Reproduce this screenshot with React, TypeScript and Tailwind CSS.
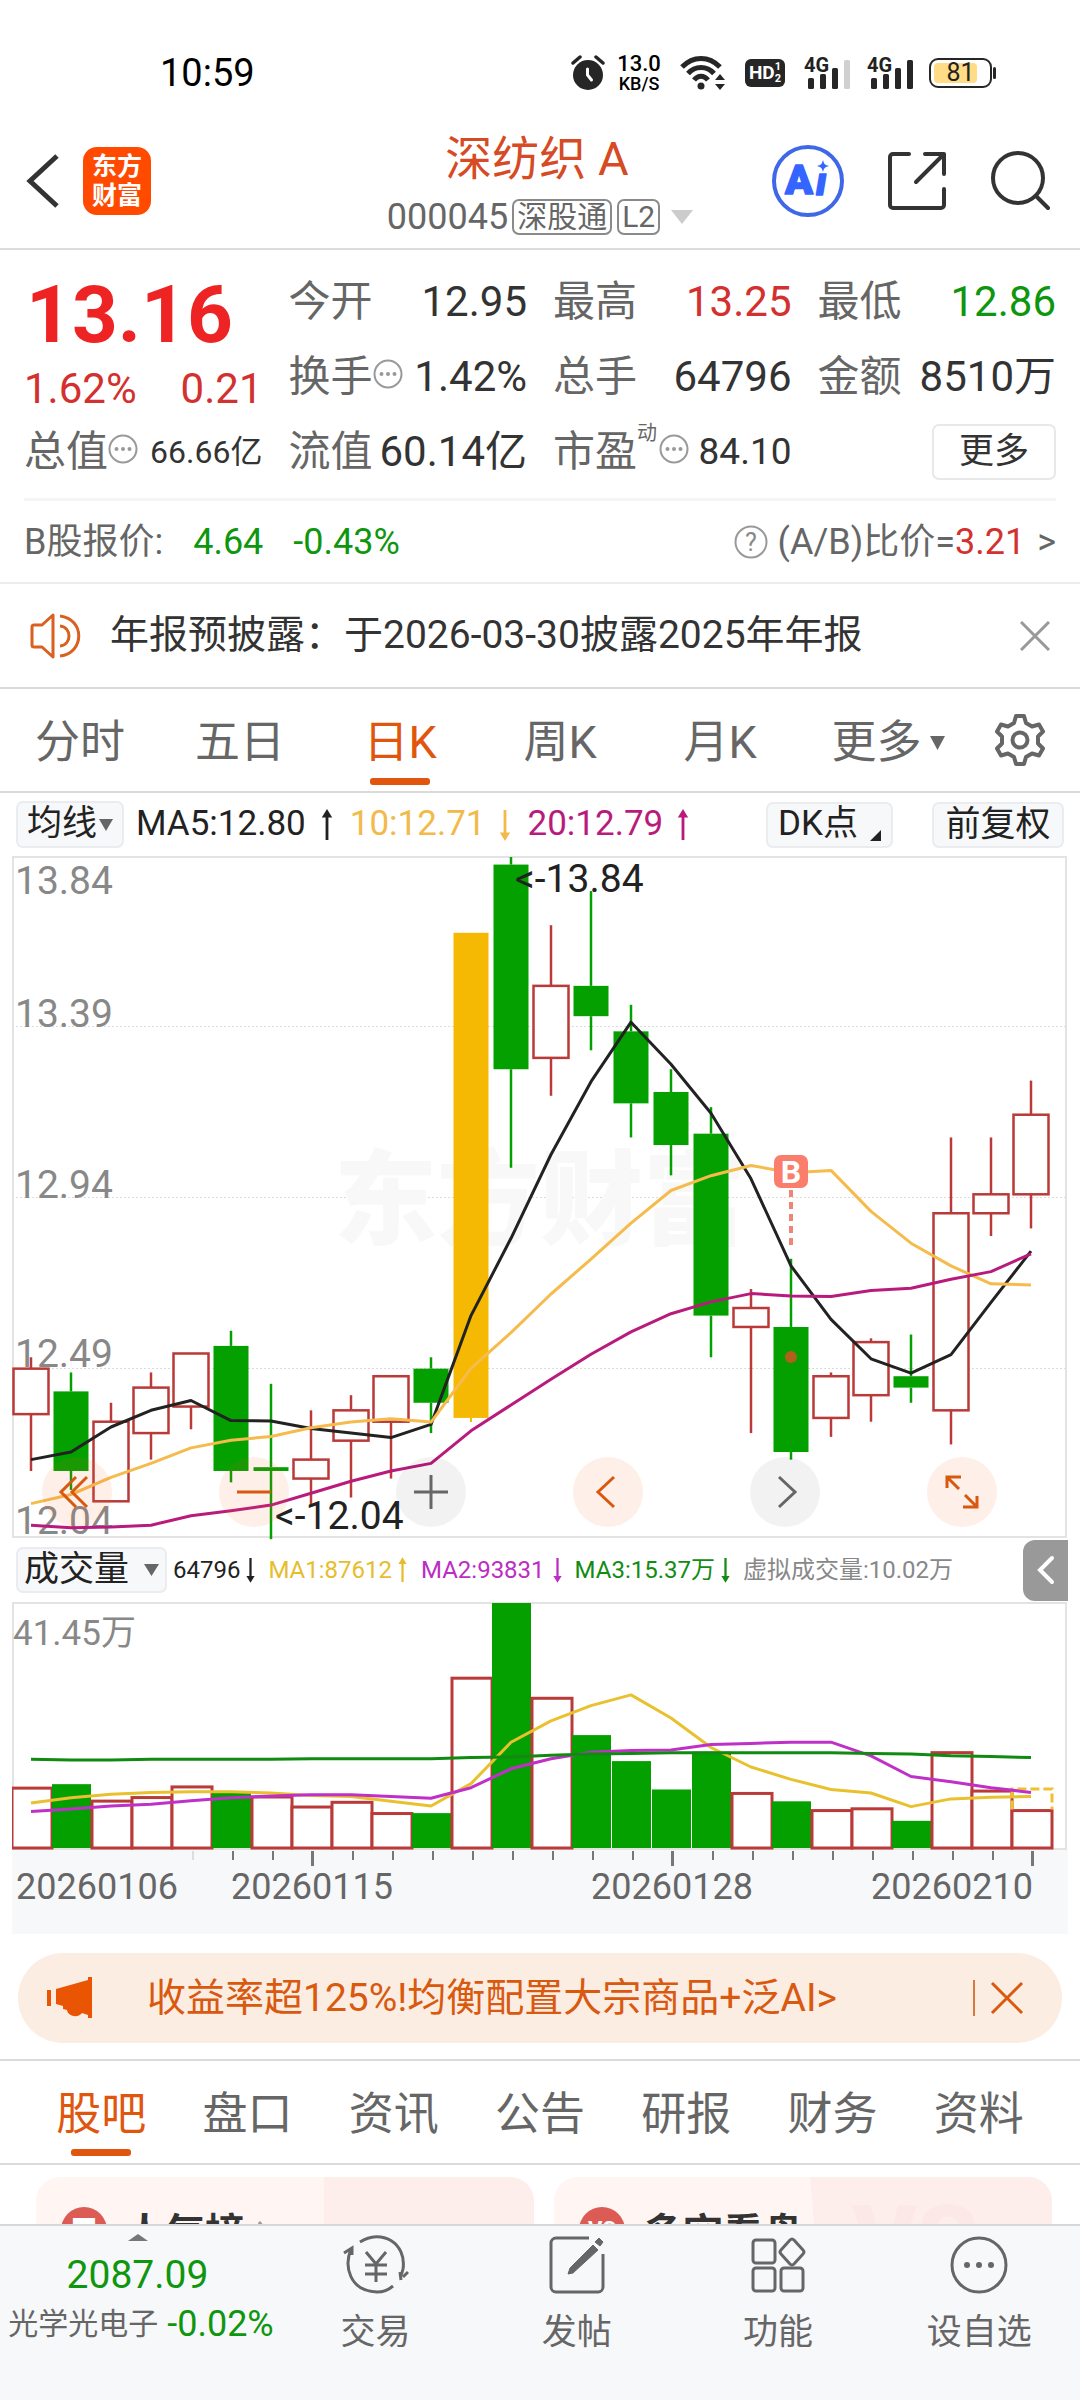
import { useState } from 'react';
import type { ReactNode } from 'react';

type Candle = { open: number; close: number; high: number; low: number; vol: number };

const RED = '#b93a38';
const GREEN = '#03a000';

// open, close, high, low, volume (in 万)
const rawCandles: [number, number, number, number, number][] = [
    [12.37, 12.49, 12.52, 12.22, 10.3],
    [12.43, 12.22, 12.48, 12.17, 10.8],
    [12.14, 12.35, 12.4, 12.14, 8.1],
    [12.32, 12.44, 12.48, 12.25, 8.7],
    [12.39, 12.53, 12.53, 12.33, 10.5],
    [12.55, 12.22, 12.59, 12.19, 9.6],
    [12.23, 12.22, 12.45, 12.04, 8.8],
    [12.2, 12.25, 12.38, 12.13, 7.1],
    [12.3, 12.38, 12.42, 12.15, 7.9],
    [12.35, 12.47, 12.47, 12.2, 6.0],
    [12.49, 12.4, 12.52, 12.32, 5.9],
    [12.36, 13.64, 13.64, 12.35, 28.9],
    [13.82, 13.28, 13.84, 13.02, 41.45],
    [13.31, 13.5, 13.66, 13.21, 25.5],
    [13.5, 13.42, 13.75, 13.33, 19.1],
    [13.38, 13.19, 13.45, 13.1, 14.7],
    [13.22, 13.08, 13.28, 13.0, 9.9],
    [13.11, 12.63, 13.18, 12.52, 16.3],
    [12.6, 12.65, 12.7, 12.32, 9.4],
    [12.6, 12.27, 12.78, 12.25, 7.9],
    [12.36, 12.47, 12.48, 12.31, 6.5],
    [12.42, 12.56, 12.57, 12.35, 6.8],
    [12.47, 12.44, 12.58, 12.4, 4.6],
    [12.38, 12.9, 13.1, 12.29, 16.3],
    [12.9, 12.95, 13.1, 12.84, 9.8],
    [12.95, 13.16, 13.25, 12.86, 6.5],
];

const candles: Candle[] = rawCandles.map(([open, close, high, low, vol]) => ({ open, close, high, low, vol }));
const LIMIT_UP_INDEX = 11;
// doji day, its volume bar is drawn hollow
const DOJI_INDEX = 6;

const ma5 = [12.25, 12.27, 12.336, 12.38, 12.406, 12.353, 12.352, 12.332, 12.32, 12.308, 12.343, 12.63, 12.834, 13.055, 13.247, 13.404, 13.293, 13.164, 12.991, 12.761, 12.62, 12.516, 12.478, 12.527, 12.665, 12.8];
const ma10 = [12.134, 12.158, 12.203, 12.24, 12.281, 12.301, 12.311, 12.334, 12.349, 12.358, 12.349, 12.491, 12.585, 12.687, 12.779, 12.874, 12.96, 12.999, 13.026, 13.007, 13.013, 12.905, 12.821, 12.761, 12.714, 12.711];
const ma20 = [12.077, 12.07, 12.072, 12.077, 12.102, 12.115, 12.13, 12.161, 12.193, 12.22, 12.24, 12.326, 12.394, 12.462, 12.528, 12.587, 12.635, 12.666, 12.688, 12.682, 12.68, 12.696, 12.702, 12.726, 12.746, 12.793];

const volMa1 = [7.6, 8.5, 9.1, 9.4, 9.5, 9.5, 9.3, 8.9, 8.7, 7.9, 7.1, 10.9, 17.9, 21.5, 24.1, 25.9, 22.0, 17.0, 13.7, 11.6, 9.9, 9.3, 7.0, 8.3, 8.6, 8.7];
const volMa2 = [6.2, 6.6, 7.1, 7.4, 8.0, 8.5, 8.8, 9.0, 9.0, 8.7, 8.4, 10.2, 13.4, 15.1, 16.2, 16.5, 16.6, 17.5, 17.7, 17.9, 17.9, 15.6, 12.1, 11.2, 10.2, 9.4];
const volMa3 = [15.0, 14.9, 14.9, 15.0, 15.0, 15.0, 15.0, 15.1, 15.1, 15.1, 15.1, 15.3, 15.4, 15.7, 15.9, 16.0, 16.1, 16.1, 16.1, 16.1, 16.1, 16.0, 15.9, 15.6, 15.5, 15.3];

const xAt = (i: number) => 19 + i * 40;
const yPrice = (p: number) => (13.84 - p) * 379 + 1;
const yVol = (v: number) => 246 - (v / 41.45) * 245;
const toPoints = (values: number[], y: (v: number) => number) => values.map((v, i) => `${xAt(i)},${y(v).toFixed(1)}`).join(' ');

function Triangle({ className, up }: { className: string; up?: boolean }) {
    return (
        <svg viewBox="0 0 10 8" preserveAspectRatio="none" className={className} fill="currentColor" aria-hidden="true">
            <path d={up ? 'M0 8h10L5 0z' : 'M0 0h10L5 8z'} />
        </svg>
    );
}

function TrendArrow({ up, className }: { up?: boolean; className: string }) {
    return (
        <svg viewBox="0 0 12 34" className={className} fill="currentColor" aria-hidden="true">
            {up ? <path d="M6 0l5.500 9h-4v24h-3v-24h-4z" /> : <path d="M6 34l5.500-9h-4v-24h-3v24h-4z" />}
        </svg>
    );
}

function DotsIcon() {
    return (
        <svg viewBox="0 0 30 30" className="mb-[6px] h-[30px] w-[30px] shrink-0" aria-hidden="true">
            <circle cx="15" cy="15" r="13.500" fill="none" stroke="#999" strokeWidth="2" />
            <g fill="#999">
                <circle cx="8.500" cy="15" r="2" />
                <circle cx="15" cy="15" r="2" />
                <circle cx="21.500" cy="15" r="2" />
            </g>
        </svg>
    );
}

function Signal({ weak }: { weak?: boolean }) {
    return (
        <svg viewBox="0 -6 48 46" className="h-[46px] w-[48px]" aria-hidden="true">
            <text x="0" y="16" fontSize="20" fontWeight="700" fill="#222">4G</text>
            <g fill="#262626">
                <rect x="4" y="22" width="6" height="11" rx="1.500" />
                <rect x="16" y="18" width="6" height="15" rx="1.500" />
                <rect x="28" y="12" width="6" height="21" rx="1.500" />
                <rect x="40" y="4" width="6" height="29" rx="1.500" fill={weak ? '#d0d0d0' : '#262626'} />
            </g>
        </svg>
    );
}

function StatusBar() {
    return (
        <div className="flex h-[110px] items-center justify-between pt-[36px] pr-[84px] pl-[160px] text-black">
            <span className="text-[38px]">10:59</span>
            <div className="flex items-center">
                <svg viewBox="0 0 34 36" className="h-[36px] w-[34px]" aria-hidden="true">
                    <circle cx="17" cy="20" r="15" fill="#262626" />
                    <path d="M2 8l7-6M32 8l-7-6" stroke="#262626" strokeWidth="3.500" strokeLinecap="round" />
                    <path d="M16.500 14v6l4 5" stroke="#fff" strokeWidth="3" fill="none" strokeLinecap="round" />
                </svg>
                <div className="ml-[11px] flex w-[46px] flex-col items-center font-medium">
                    <span className="text-[22px] leading-[22px]">13.0</span>
                    <span className="text-[18px] leading-[18px]">KB/S</span>
                </div>
                <svg viewBox="0 0 46 36" className="ml-[18px] h-[36px] w-[46px]" fill="none" stroke="#262626" strokeWidth="5" aria-hidden="true">
                    <path d="M2 12C13 .5 29 .5 40 12" />
                    <path d="M8 18.500C15 10.500 27 10.500 34 18.500" />
                    <path d="M14 25c4-5 10-5 14 0" />
                    <circle cx="21" cy="31" r="3.500" fill="#262626" stroke="none" />
                    <path d="M35 25h10l-5-6zM35 29h10l-5 6z" fill="#262626" stroke="none" />
                </svg>
                <div className="ml-[19px] flex h-[28px] w-[40px] items-center justify-center rounded-[6px] bg-[#262626] text-white">
                    <span className="text-[19px] leading-[28px] font-bold">HD</span>
                    <span className="flex flex-col text-[11px] leading-[12px] font-bold">
                        <span>1</span>
                        <span>2</span>
                    </span>
                </div>
                <div className="ml-[19px] flex gap-[15px]">
                    <Signal weak />
                    <Signal />
                </div>
                <div className="ml-[14px] flex h-[30px] w-[63px] rounded-[9px] border-[2px] border-[#262626] p-[3px]">
                    <div className="flex w-[43px] items-center justify-center rounded-[4px] bg-[#ffdc85] pl-[10px] text-[25px] leading-[20px] text-[#222]">81</div>
                </div>
                <div className="ml-[1px] h-[12px] w-[3px] rounded-full bg-[#262626]" />
            </div>
        </div>
    );
}

function Header() {
    return (
        <header className="grid h-[140px] grid-cols-[1fr_auto_1fr] border-b-2 border-[#dcdcdc]">
            <div className="flex items-center pt-[4px] pl-[26px]">
                <button aria-label="返回" className="w-[34px]">
                    <svg viewBox="0 0 34 56" className="h-[56px] w-[34px]" fill="none" stroke="#333" strokeWidth="5">
                        <path d="M31 3L4 28l27 25" />
                    </svg>
                </button>
                <a href="#home" className="ml-[23px] flex h-[68px] w-[68px] flex-col items-center justify-center rounded-[14px] bg-[#ff4a00] text-[25px] leading-[29px] font-bold text-white">
                    <span>东方</span>
                    <span>财富</span>
                </a>
            </div>
            <div className="flex flex-col items-center pt-[21px]">
                <h1 className="pr-[6px] text-[47px] leading-[56px] text-[#d64a24]">深纺织 A</h1>
                <button className="mt-[12px] flex h-[36px] items-center text-[36px] leading-[36px] text-[#666]">
                    000045
                    <span className="ml-[4px] rounded-[7px] border-[2px] border-[#8a8a8a] px-[3px] text-[30px] leading-[32px]">深股通</span>
                    <span className="ml-[5px] rounded-[7px] border-[2px] border-[#8a8a8a] px-[3px] text-[30px] leading-[32px]">L2</span>
                    <Triangle className="ml-[11px] h-[14px] w-[22px] text-[#ccc]" />
                </button>
            </div>
            <div className="flex items-center justify-end pt-[4px] pr-[30px]">
                <button aria-label="Ai" className="mr-[42px]">
                    <svg viewBox="0 0 74 74" className="h-[74px] w-[74px]">
                        <circle cx="37" cy="37" r="34" fill="#fff" stroke="#3f68e8" strokeWidth="4" />
                        <g fill="#3565ff" stroke="#3565ff" strokeWidth="1.500" strokeLinejoin="round" fontWeight="900" fontFamily="Roboto">
                            <text x="14" y="50" fontSize="41">A</text>
                            <text x="45" y="51" fontSize="38" fontStyle="italic">ı</text>
                        </g>
                        <path d="M52 16c1 4 2 5 6 6-4 1-5 2-6 6-1-4-2-5-6-6 4-1 5-2 6-6z" fill="#3565ff" />
                    </svg>
                </button>
                <button aria-label="分享" className="mr-[43px]">
                    <svg viewBox="0 0 60 60" className="h-[60px] w-[60px]" fill="none" stroke="#333" strokeWidth="4" strokeLinecap="round" strokeLinejoin="round">
                        <path d="M22 3H6a3 3 0 0 0-3 3v48a3 3 0 0 0 3 3h48a3 3 0 0 0 3-3V38" />
                        <path d="M38 3h19v20M57 3L29 31" />
                    </svg>
                </button>
                <button aria-label="搜索">
                    <svg viewBox="0 0 60 60" className="h-[60px] w-[60px]" fill="none" stroke="#333" strokeWidth="4" strokeLinecap="round">
                        <circle cx="28" cy="27" r="25" />
                        <path d="M46 45l12 12" />
                    </svg>
                </button>
            </div>
        </header>
    );
}

function Stat({ label, value, icon, sup, color, size }: { label: string; value: string; icon?: boolean; sup?: string; color?: string; size?: string }) {
    return (
        <div className="flex h-[75px] items-center justify-between whitespace-nowrap">
            <dt className="flex items-center text-[42px] text-[#666]">
                {label}
                {sup && <span className="mb-[38px] w-[22px] text-[20px] leading-[20px]">{sup}</span>}
                {icon && <DotsIcon />}
            </dt>
            <dd className={`${size ?? 'text-[42px]'} ${color ?? 'text-[#333]'}`}>{value}</dd>
        </div>
    );
}

function Quote() {
    return (
        <section className="px-[24px]">
            <dl className="grid grid-cols-4 gap-x-[26px] pt-[14px] pb-[9px]">
                <div className="row-span-2 flex h-[150px] flex-col pt-[8px] text-[#d3312f]">
                    <span className="pl-[2px] text-[80px] leading-[86px] font-bold text-[#ee2424]">13.16</span>
                    <div className="flex items-center justify-between text-[42px] leading-[62px]">
                        <span>1.62%</span>
                        <span>0.21</span>
                    </div>
                </div>
                <Stat label="今开" value="12.95" />
                <Stat label="最高" value="13.25" color="text-[#d3312f]" />
                <Stat label="最低" value="12.86" color="text-[#0f960f]" />
                <Stat label="换手" value="1.42%" icon />
                <Stat label="总手" value="64796" />
                <Stat label="金额" value="8510万" />
                <Stat label="总值" value="66.66亿" icon size="text-[32px]" />
                <Stat label="流值" value="60.14亿" />
                <Stat label="市盈" value="84.10" sup="动" icon size="text-[37px]" />
                <div className="flex items-center justify-end">
                    <button className="h-[56px] w-[124px] rounded-[7px] border-2 border-[#e8e8ea] text-[35px] leading-[50px] text-[#333]">更多</button>
                </div>
            </dl>
            <div className="flex h-[84px] items-center border-t-3 border-[#f5f5f6] text-[36px] text-[#666]">
                <span>B股报价:</span>
                <span className="ml-[30px] text-[#0f960f]">4.64</span>
                <span className="ml-[30px] text-[#0f960f]">-0.43%</span>
                <a href="#ratio" className="ml-auto flex items-center">
                    <svg viewBox="0 0 34 34" className="mr-[10px] h-[34px] w-[34px]" aria-hidden="true">
                        <circle cx="17" cy="17" r="15.500" fill="none" stroke="#999" strokeWidth="2" />
                        <text x="17" y="26" fontSize="25" fill="#888" textAnchor="middle">?</text>
                    </svg>
                    (A/B)比价=<span className="text-[#d3312f]">3.21</span>
                    <span className="ml-[12px]">&gt;</span>
                </a>
            </div>
        </section>
    );
}

function Notice() {
    return (
        <div className="flex h-[107px] items-center border-y-2 border-t-[#ececec] border-b-[#dadada] px-[30px] text-[39px] text-[#333]">
            <svg viewBox="0 0 52 46" className="h-[46px] w-[52px]" fill="none" stroke="#d9601f" strokeWidth="3" strokeLinejoin="round" aria-hidden="true">
                <path d="M23 2v42L12 34H4a2 2 0 0 1-2-2V14a2 2 0 0 1 2-2h8z" />
                <path d="M30 3c25 3 25 37 0 40M30 13c12 1 12 19 0 20" />
            </svg>
            <p className="ml-[28px]">年报预披露：于2026-03-30披露2025年年报</p>
            <button aria-label="关闭" className="ml-auto">
                <svg viewBox="0 0 30 30" className="h-[30px] w-[30px]" stroke="#999" strokeWidth="3">
                    <path d="M1 1l28 28M29 1L1 29" />
                </svg>
            </button>
        </div>
    );
}

const periods = ['分时', '五日', '日K', '周K', '月K'];

function PeriodTabs() {
    const [active, setActive] = useState('日K');

    return (
        <nav className="flex h-[104px] items-stretch border-b-2 border-[#dadada] text-[45px] text-[#666]">
            {periods.map((name) => (
                <button key={name} onClick={() => setActive(name)} className={`relative flex flex-[4] items-center justify-center pt-[6px] ${name === active ? 'text-[#e0560f]' : ''}`}>
                    {name}
                    {name === active && <span className="absolute bottom-[6px] h-[7px] w-[60px] rounded-[3px] bg-[#e0560f]" />}
                </button>
            ))}
            <button className="flex flex-[4] items-center justify-center pt-[6px] whitespace-nowrap">
                <span className="ml-[16px]">更多</span>
                <Triangle className="ml-[8px] h-[14px] w-[15px]" />
            </button>
            <button aria-label="设置" className="flex flex-[3] items-center justify-center">
                <svg viewBox="0 0 52 52" className="h-[52px] w-[52px]" fill="none" stroke="#666" strokeWidth="4" strokeLinejoin="round">
                    <path d="M22 2h8l2 7 6 3.500 7-2 4 7-5 5v7l5 5-4 7-7-2-6 3.500-2 7h-8l-2-7-6-3.500-7 2-4-7 5-5v-7l-5-5 4-7 7 2L20 9z" />
                    <circle cx="26" cy="26" r="7.500" />
                </svg>
            </button>
        </nav>
    );
}

function MaRow() {
    return (
        <div className="flex h-[63px] items-center px-[16px] text-[35px] whitespace-nowrap text-[#222]">
            <button className="flex h-[47px] w-[108px] items-center justify-center rounded-[7px] border-2 border-[#ebecf0] bg-[#f7f8fa]">
                均线
                <Triangle className="ml-[2px] h-[12px] w-[14px] text-[#666]" />
            </button>
            <span className="ml-[12px]">MA5:12.80</span>
            <TrendArrow up className="ml-[15px] h-[32px] w-[12px]" />
            <span className="ml-[17px] text-[#f2ba4a]">10:12.71</span>
            <TrendArrow className="ml-[13px] h-[32px] w-[12px] text-[#f2ba4a]" />
            <span className="ml-[17px] text-[#b81b7c]">20:12.79</span>
            <TrendArrow up className="ml-[14px] h-[32px] w-[12px] text-[#b81b7c]" />
            <button className="ml-auto flex h-[46px] w-[127px] items-center justify-center rounded-[7px] border-2 border-[#ebecf0] bg-[#f7f8fa]">
                DK点
                <svg viewBox="0 0 10 10" className="mt-[22px] ml-[12px] h-[11px] w-[11px]" aria-hidden="true">
                    <path d="M10 0v10H0z" fill="#222" />
                </svg>
            </button>
            <button className="ml-[39px] h-[46px] w-[132px] rounded-[7px] border-2 border-[#ebecf0] bg-[#f7f8fa] leading-[42px]">前复权</button>
        </div>
    );
}

function CandleShape({ candle, index }: { candle: Candle; index: number }) {
    const x = xAt(index);
    const rising = candle.close > candle.open;
    const top = yPrice(Math.max(candle.open, candle.close));
    const bottom = yPrice(Math.min(candle.open, candle.close));

    if (index === LIMIT_UP_INDEX) {
        return (
            <g fill="#f5b904">
                <rect x={x - 17.5} y={top} width="35" height={bottom - top} />
                <rect x={x - 1} y={bottom} width="2" height="4" />
            </g>
        );
    }

    return (
        <g stroke={rising ? RED : GREEN} strokeWidth="2.500">
            <line x1={x} x2={x} y1={yPrice(candle.high)} y2={top} />
            <line x1={x} x2={x} y1={bottom} y2={yPrice(candle.low)} />
            {rising ? (
                <rect x={x - 17.5} y={top} width="35" height={bottom - top} fill="#fff" />
            ) : (
                <rect x={x - 17.5} y={top} width="35" height={bottom - top} fill={GREEN} stroke="none" />
            )}
        </g>
    );
}

const chartButtons: { label: string; warm: boolean; icon: string }[] = [
    { label: '最早', warm: true, icon: 'M34 20L19 35l15 15M45 20L30 35l15 15' },
    { label: '缩小', warm: true, icon: 'M18 35h34' },
    { label: '放大', warm: false, icon: 'M18 35h34M35 18v34' },
    { label: '向左', warm: true, icon: 'M41 20L25 35l16 15' },
    { label: '向右', warm: false, icon: 'M29 20l16 15-16 15' },
    { label: '全屏', warm: true, icon: 'M20 31V20h14M20 20l12 12M50 39v11H36M50 50L38 38' },
];

function PriceChart() {
    return (
        <div className="relative mx-[12px]">
            <svg viewBox="0 0 1056 682" className="block w-full overflow-visible" fontSize="39">
                <rect x="1" y="1" width="1053" height="680" fill="none" stroke="#e3e3e3" strokeWidth="2" />
                <g stroke="#dcdcdc" strokeDasharray="2 2">
                    <line x1="0" x2="1054" y1="170.500" y2="170.500" />
                    <line x1="0" x2="1054" y1="341.500" y2="341.500" />
                    <line x1="0" x2="1054" y1="512.500" y2="512.500" />
                </g>
                <text x="322" y="381" fontSize="103" fontWeight="900" fill="#f8f8f8">东方财富</text>
                <g fill="#888">
                    <text x="3" y="38">13.84</text>
                    <text x="3" y="171">13.39</text>
                    <text x="3" y="342">12.94</text>
                    <text x="3" y="511">12.49</text>
                    <text x="3" y="678">12.04</text>
                </g>
                {candles.map((candle, i) => (
                    <CandleShape key={i} candle={candle} index={i} />
                ))}
                <g fill="none" strokeWidth="3" strokeLinejoin="round">
                    <polyline points={toPoints(ma5, yPrice)} stroke="#222" />
                    <polyline points={toPoints(ma10, yPrice)} stroke="#f5bb4d" />
                    <polyline points={toPoints(ma20, yPrice)} stroke="#b81b7c" />
                </g>
                <line x1="779" x2="779" y1="334" y2="392" stroke="#ef8577" strokeWidth="4" strokeDasharray="7 5" />
                <rect x="762" y="299" width="34" height="33" rx="7" fill="#fb7e6d" />
                <text x="779" y="327" fontSize="32" fontWeight="700" fill="#fff" textAnchor="middle">B</text>
                <circle cx="779" cy="501" r="6" fill="#b0601a" />
                <g fill="#222">
                    <text x="503" y="36">&lt;-13.84</text>
                    <text x="263" y="673">&lt;-12.04</text>
                </g>
            </svg>
            <div className="absolute right-[71px] bottom-[11px] left-[30px] flex justify-between">
                {chartButtons.map((button) => (
                    <button key={button.label} aria-label={button.label} className={`h-[70px] w-[70px] rounded-full ${button.warm ? 'bg-[#f5651a]/10 text-[#d9580f]' : 'bg-black/5 text-[#666]'}`}>
                        <svg viewBox="0 0 70 70" fill="none" stroke="currentColor" strokeWidth="3">
                            <path d={button.icon} />
                        </svg>
                    </button>
                ))}
            </div>
        </div>
    );
}

function VolumeRow() {
    return (
        <div className="mr-[12px] ml-[16px] flex h-[64px] items-center text-[24px] whitespace-nowrap text-[#222]">
            <button className="flex h-[46px] w-[151px] items-center justify-center gap-[15px] rounded-[7px] border-2 border-[#ebecf0] bg-[#f7f8fa] text-[35px]">
                成交量
                <Triangle className="h-[12px] w-[15px] text-[#666]" />
            </button>
            <span className="ml-[6px]">64796</span>
            <TrendArrow className="ml-[6px] h-[32px] w-[9px]" />
            <span className="ml-[13px] text-[#e6bd2d]">MA1:87612</span>
            <TrendArrow up className="ml-[6px] h-[32px] w-[9px] text-[#e6bd2d]" />
            <span className="ml-[14px] text-[#bb2dc4]">MA2:93831</span>
            <TrendArrow className="ml-[8px] h-[32px] w-[9px] text-[#bb2dc4]" />
            <span className="ml-[13px] text-[#128c12]">MA3:15.37万</span>
            <TrendArrow className="ml-[6px] h-[32px] w-[9px] text-[#128c12]" />
            <span className="ml-[13px] text-[#888]">虚拟成交量:10.02万</span>
            <button aria-label="展开" className="ml-auto flex h-[61px] w-[45px] items-center justify-center rounded-l-[12px] bg-[#999]">
                <svg viewBox="0 0 18 30" className="h-[30px] w-[18px]" fill="none" stroke="#fff" strokeWidth="4" strokeLinecap="round">
                    <path d="M15 3L3 15l12 12" />
                </svg>
            </button>
        </div>
    );
}

function VolumeChart() {
    const last = candles.length - 1;

    return (
        <div className="mx-[12px]">
            <svg viewBox="0 0 1056 332" className="block w-full" fontSize="36">
                <rect x="0" y="248" width="1056" height="84" fill="#f7f8fa" />
                <rect x="1" y="1" width="1053" height="246" fill="none" stroke="#e3e3e3" strokeWidth="2" />
                <text x="1" y="43" fontSize="35" fill="#888">41.45万</text>
                {candles.map((candle, i) => {
                    const y = yVol(candle.vol);
                    return candle.close > candle.open || i === DOJI_INDEX ? (
                        <rect key={i} x={xAt(i) - 19} y={y + 1} width="40" height={245 - y} fill="#fff" stroke={RED} strokeWidth="3" />
                    ) : (
                        <rect key={i} x={xAt(i) - 19} y={y} width="39" height={246 - y} fill={GREEN} />
                    );
                })}
                <path d={`M${xAt(last) - 19} ${yVol(6.5)}V187h40V${yVol(6.5)}`} fill="none" stroke="#f0c030" strokeWidth="3" strokeDasharray="9 4" />
                <g fill="none" strokeWidth="3" strokeLinejoin="round">
                    <polyline points={toPoints(volMa1, yVol)} stroke="#e9c12f" />
                    <polyline points={toPoints(volMa2, yVol)} stroke="#bf30c8" />
                    <polyline points={toPoints(volMa3, yVol)} stroke="#118a11" />
                </g>
                {candles.map((_, i) => {
                    if (i < 4) return null;
                    const major = i === 7 || i === 16 || i === last;
                    return <rect key={i} x={xAt(i) + (major ? 0 : 1)} y="249" width={major ? 3 : 2} height={major ? 15 : 9} fill={i === 4 ? '#ddd' : '#777'} />;
                })}
                <g fill="#666">
                    <text x="4" y="297">20260106</text>
                    <text x="219" y="297">20260115</text>
                    <text x="579" y="297">20260128</text>
                    <text x="859" y="297">20260210</text>
                </g>
            </svg>
        </div>
    );
}

function Promo() {
    return (
        <div className="mx-[18px] mt-[19px] mb-[16px] flex h-[90px] items-center rounded-full bg-[#fcede3] pr-[38px] pl-[28px] text-[39px] text-[#d9590f]">
            <svg viewBox="0 0 48 42" className="h-[42px] w-[48px]" fill="#ea5504" aria-hidden="true">
                <path d="M1 13h4v16H1zM10 12L42 3V0h4v41h-4v-3l-6-2c-3 5-14 4-15-3l-4-1v-3l-7-2z" />
            </svg>
            <a href="#promo" className="ml-[53px]">收益率超125%!均衡配置大宗商品+泛AI&gt;</a>
            <span className="ml-auto h-[36px] w-[2px] bg-[#d9793f]" />
            <button aria-label="关闭" className="ml-[15px]">
                <svg viewBox="0 0 34 34" className="h-[34px] w-[34px]" stroke="#d9590f" strokeWidth="3">
                    <path d="M2 2l30 30M32 2L2 32" />
                </svg>
            </button>
        </div>
    );
}

const sections = ['股吧', '盘口', '资讯', '公告', '研报', '财务', '资料'];

function SectionTabs() {
    const [active, setActive] = useState('股吧');

    return (
        <nav className="flex h-[106px] border-y-2 border-[#dadada] px-[28px] text-[45px] text-[#666]">
            {sections.map((name) => (
                <button key={name} onClick={() => setActive(name)} className={`relative flex flex-1 items-center justify-center pt-[6px] ${name === active ? 'text-[#e0560f]' : ''}`}>
                    {name}
                    {name === active && <span className="absolute bottom-[7px] h-[7px] w-[60px] rounded-[3px] bg-[#e0560f]" />}
                </button>
            ))}
        </nav>
    );
}

function TopicCard({ title, badge, arrow, children }: { title: string; badge: ReactNode; arrow?: boolean; children: ReactNode }) {
    return (
        <a href="#topic" className="relative flex h-[140px] flex-1 items-start overflow-hidden rounded-[24px] bg-[#fff6f4] pt-[27px] pl-[25px]">
            <svg viewBox="0 0 260 140" className="absolute top-0 right-0 h-[140px] w-[260px]" aria-hidden="true">
                {children}
            </svg>
            <span className="relative mt-[3px] flex h-[46px] w-[46px] items-center justify-center rounded-full bg-[#dd5b55] text-[22px] leading-[46px] font-bold text-white">{badge}</span>
            <span className="relative ml-[18px] text-[40px] leading-[60px] font-bold text-[#333]">{title}</span>
            {arrow && (
                <svg viewBox="0 0 12 24" className="relative mt-[16px] ml-[12px] h-[24px] w-[12px]" fill="none" stroke="#999" strokeWidth="3" aria-hidden="true">
                    <path d="M2 2l8 10-8 10" />
                </svg>
            )}
        </a>
    );
}

function BottomBar() {
    const stroke = { fill: 'none', stroke: '#666', strokeWidth: 3 };
    const items: { label: string; icon: ReactNode }[] = [
        {
            label: '交易',
            icon: (
                <svg viewBox="0 0 66 60" className="h-[60px] w-[66px]" {...stroke}>
                    <path d="M17 8C38-6 64 9 60 35q-1 5-3 8M60 43l5-5M8 15C1 32 6 57 34 58q9 0 16-6M1 19l8-5v7M58 46l-1-8M23 18l10 12 10-12M22 31h22M22 40h22M33 30v18" />
                </svg>
            ),
        },
        {
            label: '发帖',
            icon: (
                <svg viewBox="0 0 60 60" className="h-[60px] w-[60px]" {...stroke}>
                    <path d="M42 4H9a5 5 0 0 0-5 5v44a5 5 0 0 0 5 5h42a5 5 0 0 0 5-5V20" />
                    <path d="M52 4l4 4-3 4-5-4zM46 11l5 5-25 23-5 1 2-6z" fill="#666" strokeWidth="1" />
                </svg>
            ),
        },
        {
            label: '功能',
            icon: (
                <svg viewBox="0 0 60 60" className="h-[60px] w-[60px]" {...stroke}>
                    <rect x="5" y="6" width="22" height="23" rx="3" />
                    <rect x="5" y="34" width="22" height="23" rx="3" />
                    <rect x="33" y="34" width="22" height="23" rx="3" />
                    <path d="M42 6q2-2 4 0l9 10q2 2 0 4l-9 10q-2 2-4 0l-9-10q-2-2 0-4z" />
                </svg>
            ),
        },
        {
            label: '设自选',
            icon: (
                <svg viewBox="0 0 60 60" className="h-[60px] w-[60px]" {...stroke}>
                    <circle cx="30" cy="31" r="27" />
                    <g fill="#666" stroke="none">
                        <circle cx="18" cy="31" r="3" />
                        <circle cx="30" cy="31" r="3" />
                        <circle cx="42" cy="31" r="3" />
                    </g>
                </svg>
            ),
        },
    ];

    return (
        <footer className="flex h-[176px] shrink-0 border-t-2 border-[#d8d8da] bg-[#f7f8fa]">
            <button className="flex w-[275px] flex-col items-center pt-[8px] whitespace-nowrap">
                <Triangle up className="h-[7px] w-[20px] text-[#777]" />
                <span className="mt-[11px] text-[39px] leading-[46px] text-[#0f960f]">2087.09</span>
                <span className="mt-[6px] flex items-center pl-[7px] leading-[40px]">
                    <span className="text-[30px] text-[#666]">光学光电子</span>
                    <span className="ml-[9px] text-[36px] text-[#0f960f]">-0.02%</span>
                </span>
            </button>
            {items.map(({ label, icon }) => (
                <button key={label} className="flex flex-1 flex-col items-center pt-[8px] text-[35px] leading-[40px] text-[#666]">
                    {icon}
                    <span className="mt-[19px]">{label}</span>
                </button>
            ))}
        </footer>
    );
}

export default function App() {
    return (
        <div className="flex h-screen flex-col overflow-hidden bg-white font-['Roboto','Noto_Sans_CJK_SC',sans-serif]">
            <main className="min-h-0 flex-1 overflow-hidden">
                <StatusBar />
                <Header />
                <Quote />
                <Notice />
                <PeriodTabs />
                <MaRow />
                <PriceChart />
                <VolumeRow />
                <VolumeChart />
                <Promo />
                <SectionTabs />
                <div className="flex gap-[20px] pt-[12px] pr-[28px] pl-[36px]">
                    <TopicCard title="人气榜" badge="▜" arrow>
                        <path d="M50 0h210v140H0V65h50z" fill="#fdeeec" />
                        <path d="M102 50h122v90H102z" fill="#fff3f1" />
                    </TopicCard>
                    <TopicCard title="多空看盘" badge="VS">
                        <path d="M18 0h242v140H30z" fill="#fdeeec" />
                        <text x="60" y="98" fontSize="98" fontWeight="900" fill="#fce8e6">VS</text>
                    </TopicCard>
                </div>
            </main>
            <BottomBar />
        </div>
    );
}
